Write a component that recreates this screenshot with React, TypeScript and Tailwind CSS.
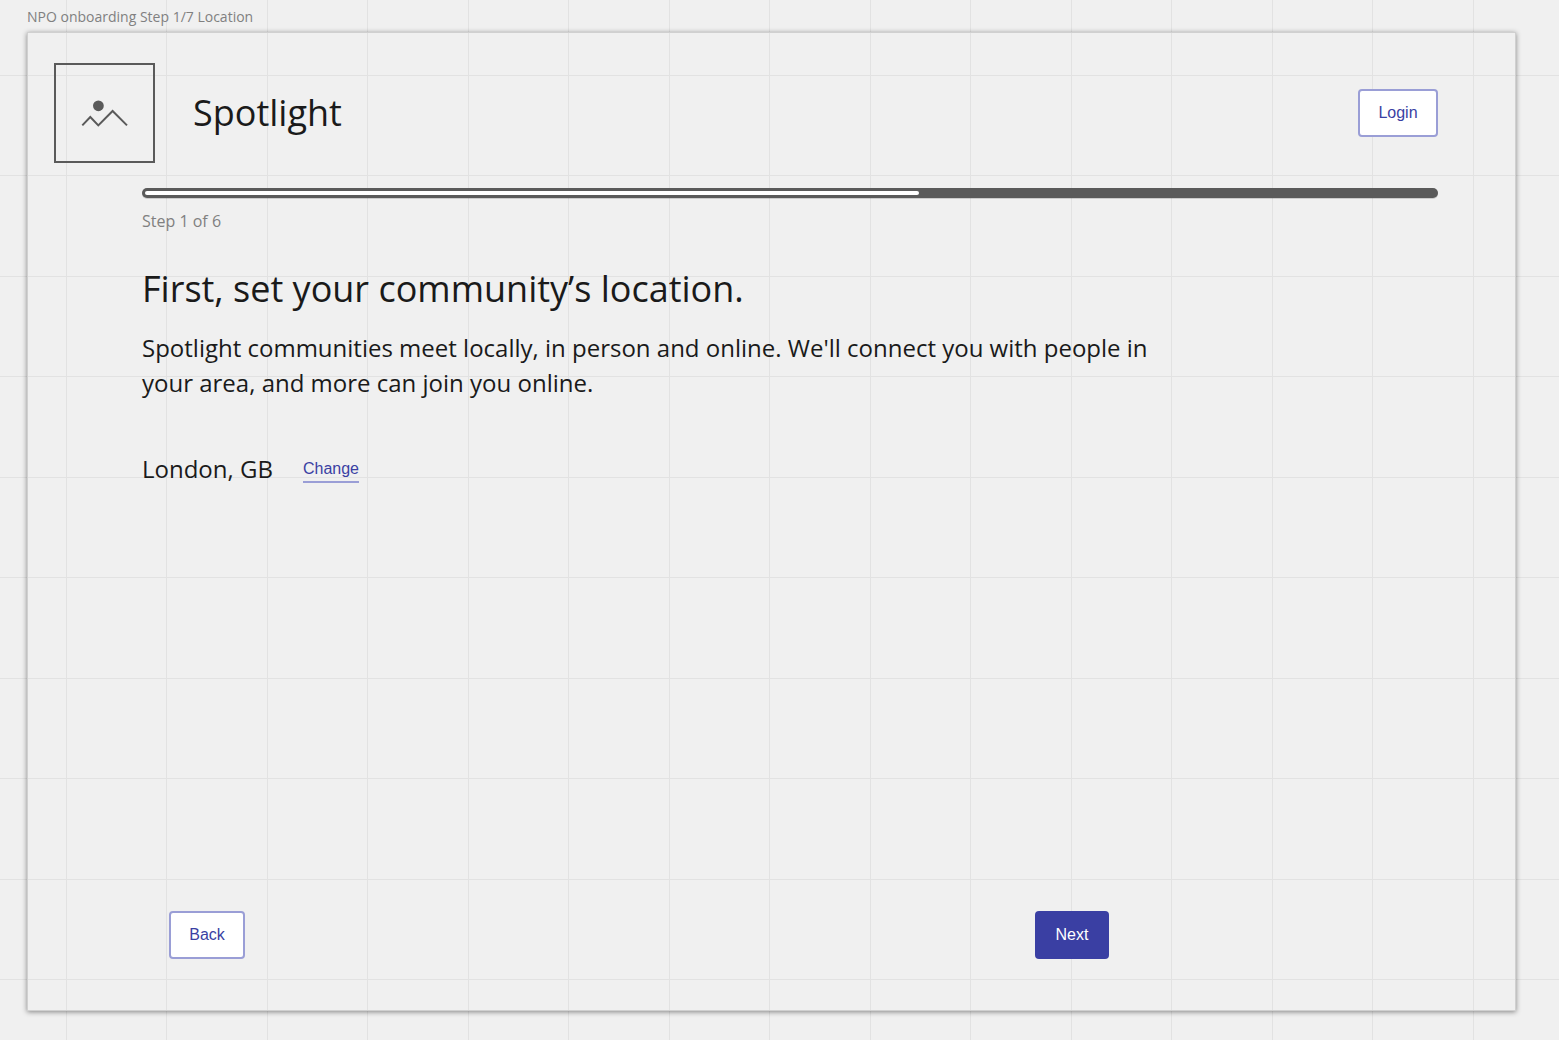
export default function App() {
  return (
    <div className="min-h-screen bg-[#f0f0f0] bg-[linear-gradient(to_right,#e2e2e2_1px,transparent_1px,transparent_100px,#e2e2e2_100px,#e2e2e2_101px,transparent_101px),linear-gradient(to_bottom,#e2e2e2_1px,transparent_1px,transparent_100px,#e2e2e2_100px,#e2e2e2_101px,transparent_101px)] bg-[size:201px_201px] bg-[position:66px_75px] pl-[27px] pr-[43px] pt-[9px] pb-[29px] flex flex-col font-['Open_Sans',sans-serif] text-[#1a1a1a]">
      <p className="text-sm leading-4 text-[#808080] mb-[7px]">NPO onboarding Step 1/7 Location</p>
      <main className="grow flex flex-col border border-[#d0d0d0] shadow-[0_1px_5px_rgba(0,0,0,0.45)] pr-[77px] pb-[51px]">
        <header className="flex items-center pt-[30px] pl-[26px]">
          <svg className="w-[101px] h-[100px]" viewBox="0 0 101 100" fill="none" stroke="#5a5a5a" strokeWidth="2" role="img" aria-label="Spotlight logo">
            <rect x="1" y="1" width="99" height="98" />
            <circle cx="44.4" cy="42.8" r="5.4" fill="#5a5a5a" stroke="none" />
            <path d="M28.300 62.400L36.300 54L44.300 62.400L58.600 48L73 62.400" />
          </svg>
          <h1 className="ml-[38px] text-4xl">Spotlight</h1>
          <button className="ml-auto h-12 w-20 rounded border-2 border-[#9a9ed6] bg-white font-['Liberation_Sans',sans-serif] text-base text-[#3a3fa3]">Login</button>
        </header>
        <section className="pl-[114px] pt-[25px] grow flex flex-col">
          <div role="progressbar" aria-label="Onboarding progress" aria-valuenow={60} className="h-[10px] rounded-full bg-[#5a5a5a] p-[3px] shadow-[0_1px_0_rgba(0,0,0,0.15)]">
            <div className="h-1 w-3/5 rounded-full bg-white" />
          </div>
          <p className="mt-[11px] text-base text-[#808080]">Step 1 of 6</p>
          <h2 className="mt-[31px] text-4xl leading-[50px]">First, set your community’s location.</h2>
          <p className="mt-4 max-w-[1030px] text-2xl leading-[35px]">Spotlight communities meet locally, in person and online. We'll connect you with people in your area, and more can join you online.</p>
          <div className="mt-[53px] flex items-center gap-[30px]">
            <p className="text-2xl">London, GB</p>
            <a href="#" className="border-b-2 border-[#9a9ed6] pt-0.5 font-['Liberation_Sans',sans-serif] text-base text-[#3a3fa3]">Change</a>
          </div>
          <div className="mt-auto flex justify-between pl-[27px] pr-[329px] font-['Liberation_Sans',sans-serif] text-base">
            <button className="h-12 w-[76px] rounded border-2 border-[#9a9ed6] bg-white text-[#3a3fa3]">Back</button>
            <button className="h-12 w-[74px] rounded bg-[#3a3fa3] text-white">Next</button>
          </div>
        </section>
      </main>
    </div>
  );
}
